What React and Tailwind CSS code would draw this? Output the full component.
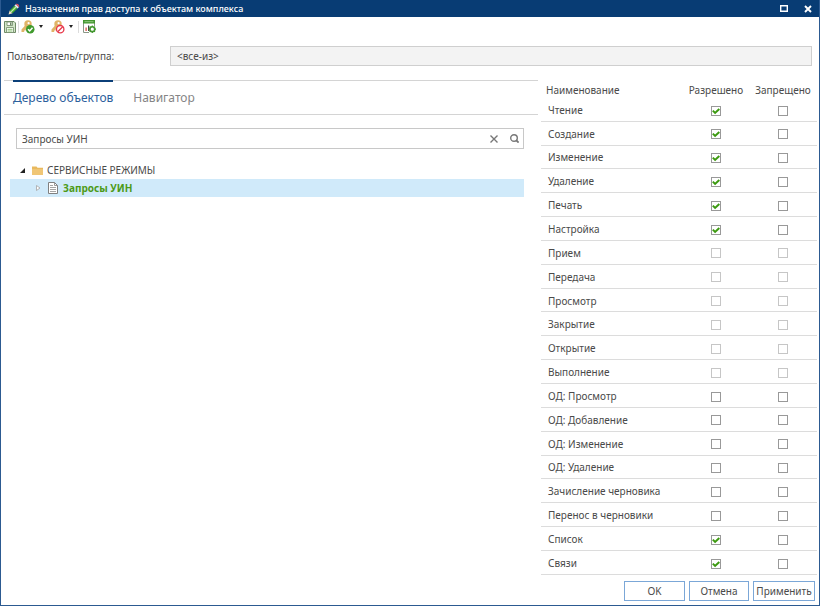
import React, { useState } from "react";

const RIGHTS = [
  { name: "Чтение", allowed: true },
  { name: "Создание", allowed: true },
  { name: "Изменение", allowed: true },
  { name: "Удаление", allowed: true },
  { name: "Печать", allowed: true },
  { name: "Настройка", allowed: true },
  { name: "Прием", disabled: true },
  { name: "Передача", disabled: true },
  { name: "Просмотр", disabled: true },
  { name: "Закрытие", disabled: true },
  { name: "Открытие", disabled: true },
  { name: "Выполнение", disabled: true },
  { name: "ОД: Просмотр" },
  { name: "ОД: Добавление" },
  { name: "ОД: Изменение" },
  { name: "ОД: Удаление" },
  { name: "Зачисление черновика" },
  { name: "Перенос в черновики" },
  { name: "Список", allowed: true },
  { name: "Связи", allowed: true },
];

const TABS = ["Дерево объектов", "Навигатор"];

function PencilIcon() {
  return (
    <svg width="12" height="12" viewBox="0 0 12 12" aria-hidden="true">
      <path d="M.5 11.500l1.200-4L4.500 10.300z" fill="#f3e3c0" />
      <path d="M1.700 7.500L6.500 2.500l3 3-5 4.800z" fill="#43a832" />
      <path d="M2.600 8.400L7.500 3.500l.9.900-4.900 4.900z" fill="#c4ecac" />
      <path d="M6.500 2.500l1.300-1.300 3 3-1.300 1.300z" fill="#e8eef5" />
      <path d="M7.800 1.200c1.400-1.600 4.600 1.400 3 3z" fill="#e0566b" />
    </svg>
  );
}

function SaveIcon() {
  return (
    <svg width="12" height="12" viewBox="0 0 12 12" fill="none" aria-hidden="true">
      <path d="M.5.5h9.500l1.500 1.500v9.500H.5z" fill="#d3e6c9" stroke="#6f8a66" />
      <path d="M3 1h5.500v3.500H3z" fill="#fff" stroke="#6f8a66" strokeWidth=".8" />
      <path d="M6 1.500h1.500v2.500H6z" fill="#6f8a66" />
      <path d="M2.500 6.500h7v5h-7z" fill="#fff" stroke="#6f8a66" strokeWidth=".8" />
      <path d="M3.500 8.300h5M3.500 10h5" stroke="#7dbb62" strokeWidth=".9" />
    </svg>
  );
}

function KeyShape() {
  return (
    <g>
      <path d="M4.500 5L.5 9.500V12h2.700v-1.500h1.500V9L8 7.500z" fill="#e0b468" />
      <circle cx="7" cy="4" r="3.700" fill="#e0b468" />
      <circle cx="7.600" cy="3.200" r="1.100" fill="#fff" />
    </g>
  );
}

function KeyAllowIcon() {
  return (
    <svg width="14" height="14" viewBox="0 0 14 14" fill="none" aria-hidden="true">
      <KeyShape />
      <circle cx="9.200" cy="9.200" r="4.300" fill="#3f9a2c" />
      <path d="M7 9.200l1.700 1.700 2.800-3.200" stroke="#fff" strokeWidth="1.500" />
    </svg>
  );
}

function KeyDenyIcon() {
  return (
    <svg width="14" height="14" viewBox="0 0 14 14" fill="none" aria-hidden="true">
      <KeyShape />
      <circle cx="9.200" cy="9.200" r="3.700" fill="#fff" stroke="#e8384a" strokeWidth="1.300" />
      <path d="M6.700 6.700l5 5" stroke="#e8384a" strokeWidth="1.300" transform="matrix(-1 0 0 1 18.400 0)" />
    </svg>
  );
}

function TableSettingsIcon() {
  return (
    <svg width="13" height="13" viewBox="0 0 13 13" fill="none" aria-hidden="true">
      <path d="M.5 1v11.500M11.500 1v5M.5 12.500H6" stroke="#8b9686" />
      <path d="M0 0h12v3.500H0z" fill="#43962f" />
      <path d="M1.500 1.700h9" stroke="#a5d493" strokeWidth=".8" />
      <path d="M2.500 7.500h1.200V11H2.500z" fill="#d8433b" />
      <path d="M5 5.500h1.200V11H5z" fill="#454545" />
      <circle cx="9.300" cy="9.200" r="2.400" fill="#fff" stroke="#43962f" strokeWidth="1.600" />
      <path
        d="M9.300 5.500v1.500M9.300 11.400v1.500M5.600 9.200h1.500M11.500 9.200H13M6.700 6.600l1 1M10.900 10.800l1 1M11.900 6.600l-1 1M7.700 10.800l-1 1"
        stroke="#43962f"
        strokeWidth="1.200"
      />
    </svg>
  );
}

function CaretIcon() {
  return (
    <svg width="4" height="3" viewBox="0 0 4 3" aria-hidden="true">
      <path d="M0 0h4L2 3z" fill="#222" />
    </svg>
  );
}

function FolderIcon() {
  return (
    <svg width="11" height="9" viewBox="0 0 11 9" aria-hidden="true">
      <path d="M0 .5h4.500l1 1.200H11V9H0z" fill="#e9b95e" />
      <path d="M0 3h11v6H0z" fill="#f0c676" />
    </svg>
  );
}

function DocumentIcon() {
  return (
    <svg width="10" height="12" viewBox="0 0 10 12" fill="none" aria-hidden="true">
      <path d="M.5.5h6l3 3v8h-9z" fill="#fff" stroke="#808080" />
      <path d="M6.500.5v3h3" stroke="#808080" strokeWidth=".8" />
      <path d="M2 3.500h3M2 5.500h6M2 7.500h6M2 9.500h6" stroke="#a5a5a5" />
    </svg>
  );
}

function CheckBox({ label, checked, disabled, onChange }) {
  return (
    <span className="inline-grid size-[10px] place-items-center align-middle">
      <input
        type="checkbox"
        aria-label={label}
        checked={checked}
        disabled={disabled}
        onChange={onChange}
        className="col-start-1 row-start-1 size-[10px] appearance-none border border-[#999] bg-white disabled:border-[#c6c6c6]"
      />
      {checked && (
        <svg
          width="8"
          height="8"
          viewBox="0 0 8 8"
          fill="none"
          className="pointer-events-none col-start-1 row-start-1"
          aria-hidden="true"
        >
          <path d="M.8 3.600l2.300 2.300L7.300 2" stroke="#3c9a10" strokeWidth="2" />
        </svg>
      )}
    </span>
  );
}

function RightsTable() {
  const [rights, setRights] = useState(RIGHTS);

  function toggle(index, field) {
    setRights((prev) =>
      prev.map((item, i) => (i === index ? { ...item, [field]: !item[field] } : item))
    );
  }

  return (
    <table className="h-full w-full table-fixed border-collapse">
      <thead>
        <tr className="h-4">
          <th className="p-0 pl-[5px] text-left font-normal">Наименование</th>
          <th className="w-[66px] p-0 font-normal">Разрешено</th>
          <th className="w-[68px] p-0 font-normal">Запрещено</th>
        </tr>
      </thead>
      <tbody>
        {rights.map((item, index) => (
          <tr key={item.name} className="border-b border-[#dcdcdc]">
            <td className="p-0 pt-px pl-[7px]">{item.name}</td>
            <td className="p-0 pt-px text-center leading-none">
              <CheckBox
                label={`${item.name}: разрешено`}
                checked={Boolean(item.allowed)}
                disabled={item.disabled}
                onChange={() => toggle(index, "allowed")}
              />
            </td>
            <td className="p-0 pt-px text-center leading-none">
              <CheckBox
                label={`${item.name}: запрещено`}
                checked={Boolean(item.denied)}
                disabled={item.disabled}
                onChange={() => toggle(index, "denied")}
              />
            </td>
          </tr>
        ))}
      </tbody>
    </table>
  );
}

function ObjectTree() {
  return (
    <ul role="tree" className="mt-3 mr-[14px] ml-[6px]">
      <li role="treeitem" aria-expanded="true">
        <div className="flex h-[18px] items-center pl-[10px]">
          <svg width="5" height="5" viewBox="0 0 5 5" aria-hidden="true">
            <path d="M5 0v5H0z" fill="#222" />
          </svg>
          <span className="mr-1 ml-[7px]">
            <FolderIcon />
          </span>
          СЕРВИСНЫЕ РЕЖИМЫ
        </div>
        <ul role="group">
          <li
            role="treeitem"
            aria-selected="true"
            className="flex h-[18px] items-center bg-[#d0eafa] pl-[26px] font-bold text-[#4d9a17]"
          >
            <svg width="5" height="6" viewBox="0 0 5 6" fill="none" aria-hidden="true">
              <path d="M.5.5L4 3 .5 5.500z" fill="#fff" stroke="#a5a5a5" strokeWidth=".8" />
            </svg>
            <span className="mr-[5px] ml-[7px]">
              <DocumentIcon />
            </span>
            Запросы УИН
          </li>
        </ul>
      </li>
    </ul>
  );
}

export default function App() {
  const [tab, setTab] = useState(TABS[0]);
  const [query, setQuery] = useState("Запросы УИН");

  return (
    <div className="flex h-screen flex-col border border-t-0 border-[#2c5a91] bg-white font-['Noto_Sans','Open_Sans',sans-serif] text-[10px] leading-4 text-[#4a4a4a]">
      <header className="flex h-[17px] shrink-0 items-center bg-[#083c74] pr-[7px] pl-[7px] text-white">
        <PencilIcon />
        <h1 className="ml-[5px] flex-1 text-[9px] font-medium">
          Назначения прав доступа к объектам комплекса
        </h1>
        <button type="button" aria-label="Развернуть" className="mr-4">
          <svg width="8" height="7" viewBox="0 0 8 7" fill="none">
            <path d="M.7.700h6.600v5.600H.7z" stroke="#fff" strokeWidth="1.400" />
          </svg>
        </button>
        <button type="button" aria-label="Закрыть">
          <svg width="8" height="8" viewBox="0 0 8 8" fill="none">
            <path d="M1 1l6 6M7 1L1 7" stroke="#fff" strokeWidth="1.900" />
          </svg>
        </button>
      </header>

      <div role="toolbar" className="flex h-[19px] shrink-0 items-center pl-[3px]">
        <button type="button" aria-label="Сохранить">
          <SaveIcon />
        </button>
        <span className="mx-[2px] h-3 w-px bg-[#dcdcdc]" />
        <button type="button" aria-label="Разрешить" className="flex items-center gap-1">
          <KeyAllowIcon />
          <CaretIcon />
        </button>
        <button type="button" aria-label="Запретить" className="ml-2 flex items-center gap-1">
          <KeyDenyIcon />
          <CaretIcon />
        </button>
        <span className="mr-1 ml-[5px] h-3 w-px bg-[#dcdcdc]" />
        <button type="button" aria-label="Настройка таблицы">
          <TableSettingsIcon />
        </button>
      </div>

      <div className="mt-[10px] flex shrink-0 items-center pr-[7px] pl-[6px]">
        <label htmlFor="subject" className="w-[163px]">
          Пользователь/группа:
        </label>
        <input
          id="subject"
          readOnly
          value="<все-из>"
          className="h-5 min-w-0 flex-1 border border-[#cfcfcf] bg-[#f3f3f3] px-[6px] outline-none"
        />
      </div>

      <div className="mt-[14px] flex min-h-0 flex-1">
        <section className="min-w-0 flex-1 pl-[3px]">
          <div role="tablist" className="flex h-[35px] gap-5 border-y border-[#d4d4d4] pl-[9px] text-[12px]">
            {TABS.map((name) => (
              <button
                key={name}
                type="button"
                role="tab"
                aria-selected={tab === name}
                onClick={() => setTab(name)}
                className={
                  tab === name
                    ? "-mt-px border-t-2 border-[#0b3f78] text-[#2c609c]"
                    : "-mt-px border-t-2 border-transparent text-[#858585]"
                }
              >
                {name}
              </button>
            ))}
          </div>

          <div className="mt-[13px] mr-[14px] ml-3 flex h-[21px] items-center border border-[#c8c8c8] pr-1">
            <input
              type="text"
              aria-label="Поиск объекта"
              value={query}
              onChange={(e) => setQuery(e.target.value)}
              className="h-full min-w-0 flex-1 px-[5px] outline-none"
            />
            <button type="button" aria-label="Очистить" onClick={() => setQuery("")} className="mr-3">
              <svg width="8" height="8" viewBox="0 0 8 8" fill="none">
                <path d="M.5.5l7 7M7.500.5l-7 7" stroke="#777" strokeWidth="1.400" />
              </svg>
            </button>
            <button type="button" aria-label="Найти">
              <svg width="9" height="9" viewBox="0 0 9 9" fill="none">
                <circle cx="4" cy="4" r="3.300" stroke="#777" strokeWidth="1.400" />
                <path d="M6 6l2.600 2.600" stroke="#777" strokeWidth="1.800" />
              </svg>
            </button>
          </div>

          <ObjectTree />
        </section>

        <section className="flex w-[281px] shrink-0 flex-col pr-[2px] pl-[3px]">
          <div className="mt-[2px] min-h-0 flex-1">
            <RightsTable />
          </div>
          <div className="mt-[6px] mb-1 flex shrink-0 justify-end gap-1 pr-[2px]">
            <button type="button" className="h-5 w-[61px] border border-[#7ba7d7] bg-white">
              OK
            </button>
            <button type="button" className="h-5 w-[60px] border border-[#7ba7d7] bg-white">
              Отмена
            </button>
            <button type="button" className="h-5 w-[62px] border border-[#7ba7d7] bg-white">
              Применить
            </button>
          </div>
        </section>
      </div>
    </div>
  );
}
